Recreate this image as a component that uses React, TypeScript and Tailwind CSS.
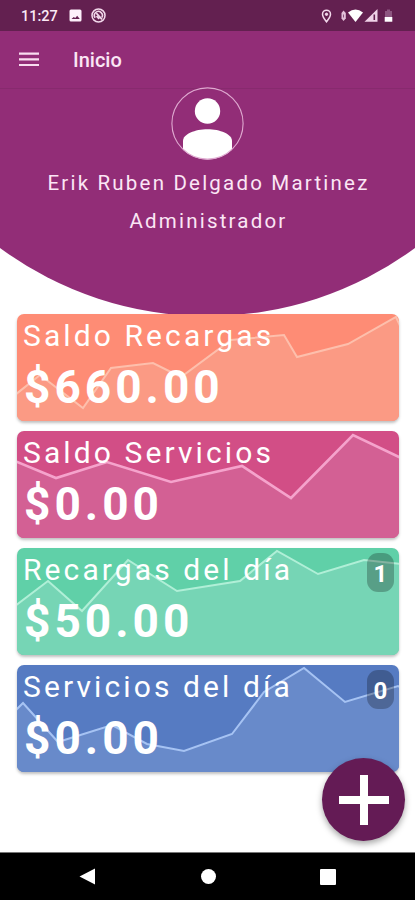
type BalanceCard = {
	title: string;
	amount: string;
	count?: string;
	background: string;
	area: string;
	line: string;
	points: string;
	strokeWidth: number;
};

const cards: BalanceCard[] = [
	{
		title: "Saldo Recargas",
		amount: "$660.00",
		background: "bg-[#fe8c75]",
		area: "#fb9a84",
		line: "#fdbfac",
		strokeWidth: 2,
		points: "-2,81 23,61 66,94 94,54 136,49 164,63 214,26 267,21 280,43 331,30 379,3 384,14",
	},
	{
		title: "Saldo Servicios",
		amount: "$0.00",
		background: "bg-[#d24e86]",
		area: "#d36094",
		line: "#f5a3cc",
		strokeWidth: 2.6,
		points: "-2,30 39,47 90,31 154,51 225,35 274,67 336,4 384,27",
	},
	{
		title: "Recargas del día",
		amount: "$50.00",
		count: "1",
		background: "bg-[#60d0a8]",
		area: "#76d5b5",
		line: "#b0efd7",
		strokeWidth: 2,
		points: "-2,58 31,33 65,63 111,12 160,43 223,33 260,3 301,26 347,12 384,16",
	},
	{
		title: "Servicios del día",
		amount: "$0.00",
		count: "0",
		background: "bg-[#567bc2]",
		area: "#688aca",
		line: "#a6c3f3",
		strokeWidth: 2,
		points: "-2,46 6,38 41,77 95,60 130,79 167,86 215,69 247,27 287,3 328,37 381,21 384,23",
	},
];

function StatusBar() {
	return (
		<div className="flex h-[31px] shrink-0 items-center bg-[#632050] pl-[21px] pr-[22px] text-white">
			<span className="w-[37px] pt-[3px] text-[14.5px] font-medium leading-none text-[#fbe9f6]">11:27</span>
			<svg className="ml-[11px]" width="13" height="13" viewBox="0 0 13 13">
				<rect x="0.5" y="0.5" width="12" height="12" rx="1.5" fill="#fdeffa" />
				<path d="M2.5 10 L4.8 8 L6.2 9 L8.2 6.8 L10.8 10 Z" fill="#632050" />
			</svg>
			<svg className="ml-[9px]" width="15" height="15" viewBox="0 0 15 15" fill="none" stroke="#f3d9ec">
				<circle cx="7.5" cy="7.5" r="6.5" strokeWidth="1.5" />
				<path d="M4.2 9.8 A4 4 0 1 1 10.8 9.5" strokeWidth="1.6" />
				<path d="M5.3 5.2 L11 11.3 M5.5 8.2 L8.2 10.8" strokeWidth="1.7" />
			</svg>
			<div className="ml-auto flex items-center">
				<svg width="11" height="14" viewBox="0 0 10 14" fill="none" stroke="#f3d9ec">
					<path d="M5 12.8 C3 10 1 7.8 1 5.2 A4 4 0 0 1 9 5.2 C9 7.8 7 10 5 12.8 Z" strokeWidth="1.5" />
					<circle cx="5" cy="5.3" r="1.2" fill="#f3d9ec" />
				</svg>
				<svg className="ml-[9px]" width="5" height="12" viewBox="0 0 5 12">
					<path d="M2.5 0.5 L4.8 3 V8.5 L2.5 11 L0.5 8.5 V3 Z" fill="#e3c2da" />
					<path d="M2.5 4.5 V7.5" stroke="#8d5680" />
				</svg>
				<svg className="ml-[2px]" width="15" height="13" viewBox="0 0 15 13">
					<path d="M0 3.4 Q7.5 -2.6 15 3.4 L7.5 13 Z" fill="#fff" />
				</svg>
				<svg className="ml-[1px]" width="14" height="13" viewBox="0 0 14 13">
					<path d="M0.5 12.7 L13.5 0 V12.7 Z" fill="#f0d3e8" />
					<path d="M9.5 5.5 h1.6 v5.5 h-1.6 z" fill="#632050" />
				</svg>
				<svg className="ml-[6px]" width="9" height="13" viewBox="0 0 9 13">
					<path d="M3 0.5 h3 v1.5 h2 v10.5 h-7 v-10.5 h2 z" fill="#8d5680" />
					<path d="M0.7 8 h7.6 v4.7 h-7.6 z" fill="#fff" />
				</svg>
			</div>
		</div>
	);
}

function Avatar() {
	return (
		<svg className="shrink-0" width="73" height="73" viewBox="0 0 73 73">
			<defs>
				<clipPath id="avatar-clip">
					<circle cx="36.5" cy="36.5" r="36" />
				</clipPath>
			</defs>
			<g clipPath="url(#avatar-clip)" fill="#fff">
				<circle cx="36.5" cy="24" r="12.7" />
				<path d="M12 74 V54 C12 47 24 42.2 36.5 42.2 C49 42.2 61 47 61 54 V74 Z" />
			</g>
			<circle cx="36.5" cy="36.5" r="35.6" fill="none" stroke="#dfa9d0" strokeWidth="1.1" />
		</svg>
	);
}

function Header() {
	return (
		<header className="relative h-[283px] shrink-0 text-[#fbe6f5]">
			{/* Curved backdrop */}
			<svg className="absolute left-0 top-0" width="415" height="290" viewBox="0 0 415 290">
				<path d="M0 0 H415 V217 A350 350 0 0 1 0 217 Z" fill="#922d77" />
				<path d="M0 57.5 H415" stroke="#872a6e" strokeWidth="1" />
			</svg>
			<div className="relative flex h-[57px] items-center pl-[19px]">
				<svg width="20" height="16" viewBox="0 0 20 16" stroke="#f8dcf0" strokeWidth="2.2">
					<path d="M0 1.7 H20 M0 7.3 H20 M0 13 H20" />
				</svg>
				<h1 className="ml-[34px] text-[20px] font-medium leading-none">Inicio</h1>
			</div>
			<div className="relative flex flex-col items-center -mt-[1px]">
				<Avatar />
				<p className="mt-[8px] whitespace-nowrap pl-[2px] text-[20.5px] leading-[30px] tracking-[2.2px]">
					Erik Ruben Delgado Martinez
				</p>
				<p className="mt-[8px] whitespace-nowrap pl-[2px] text-[20.5px] leading-[30px] tracking-[2.2px]">
					Administrador
				</p>
			</div>
		</header>
	);
}

function Card({ card }: { card: BalanceCard }) {
	return (
		<section
			className={`relative h-[107px] overflow-hidden rounded-[7px] shadow-[0_2px_3px_rgba(0,0,0,0.25)] ${card.background}`}
		>
			<svg className="absolute inset-0" width="382" height="107" viewBox="0 0 382 107">
				<polygon points={`${card.points} 384,110 -2,110`} fill={card.area} />
				<polyline points={card.points} fill="none" stroke={card.line} strokeWidth={card.strokeWidth} />
			</svg>
			<div className="relative pl-[6px] text-white">
				<h2 className="whitespace-nowrap pt-[4px] text-[30px] leading-[36px] tracking-[3.1px]">{card.title}</h2>
				<p className="mt-[6px] whitespace-nowrap pl-[1px] text-[46px] font-bold leading-[54px] tracking-[4px]">
					{card.amount}
				</p>
			</div>
			{card.count && (
				<span className="absolute right-[5px] top-[5px] flex h-[39px] w-[27px] items-center justify-center rounded-[11px] bg-black/25 pt-[3px] text-[24px] font-bold text-white">
					{card.count}
				</span>
			)}
		</section>
	);
}

function NavigationBar() {
	return (
		<nav className="mt-auto flex h-[48px] shrink-0 items-center justify-between border-t border-[#777] bg-black pl-[79px] pr-[79px]">
			<svg width="17" height="17" viewBox="0 0 17 17">
				<path d="M0.5 8.5 L16 0.5 V16.5 Z" fill="#fff" />
			</svg>
			<div className="h-[15px] w-[15px] rounded-full bg-white" />
			<div className="h-4 w-4 rounded-[1px] bg-white" />
		</nav>
	);
}

function App() {
	return (
		<div className="relative flex h-[900px] w-[415px] flex-col overflow-hidden bg-white font-['Roboto',sans-serif]">
			<StatusBar />
			<Header />
			<main className="relative flex flex-col gap-[10px] pl-[17px] pr-[16px]">
				{cards.map((card) => (
					<Card key={card.title} card={card} />
				))}
			</main>
			<button
				aria-label="Agregar"
				className="absolute bottom-[59px] right-[10px] flex h-[83px] w-[83px] items-center justify-center rounded-full bg-[#641b55] shadow-[0_3px_6px_rgba(0,0,0,0.35)]"
			>
				<svg width="50" height="50" viewBox="0 0 50 50">
					<path d="M21 0 h8 v21 h21 v8 h-21 v21 h-8 v-21 h-21 v-8 h21 z" fill="#fff" />
				</svg>
			</button>
			<NavigationBar />
		</div>
	);
}

export default App;
